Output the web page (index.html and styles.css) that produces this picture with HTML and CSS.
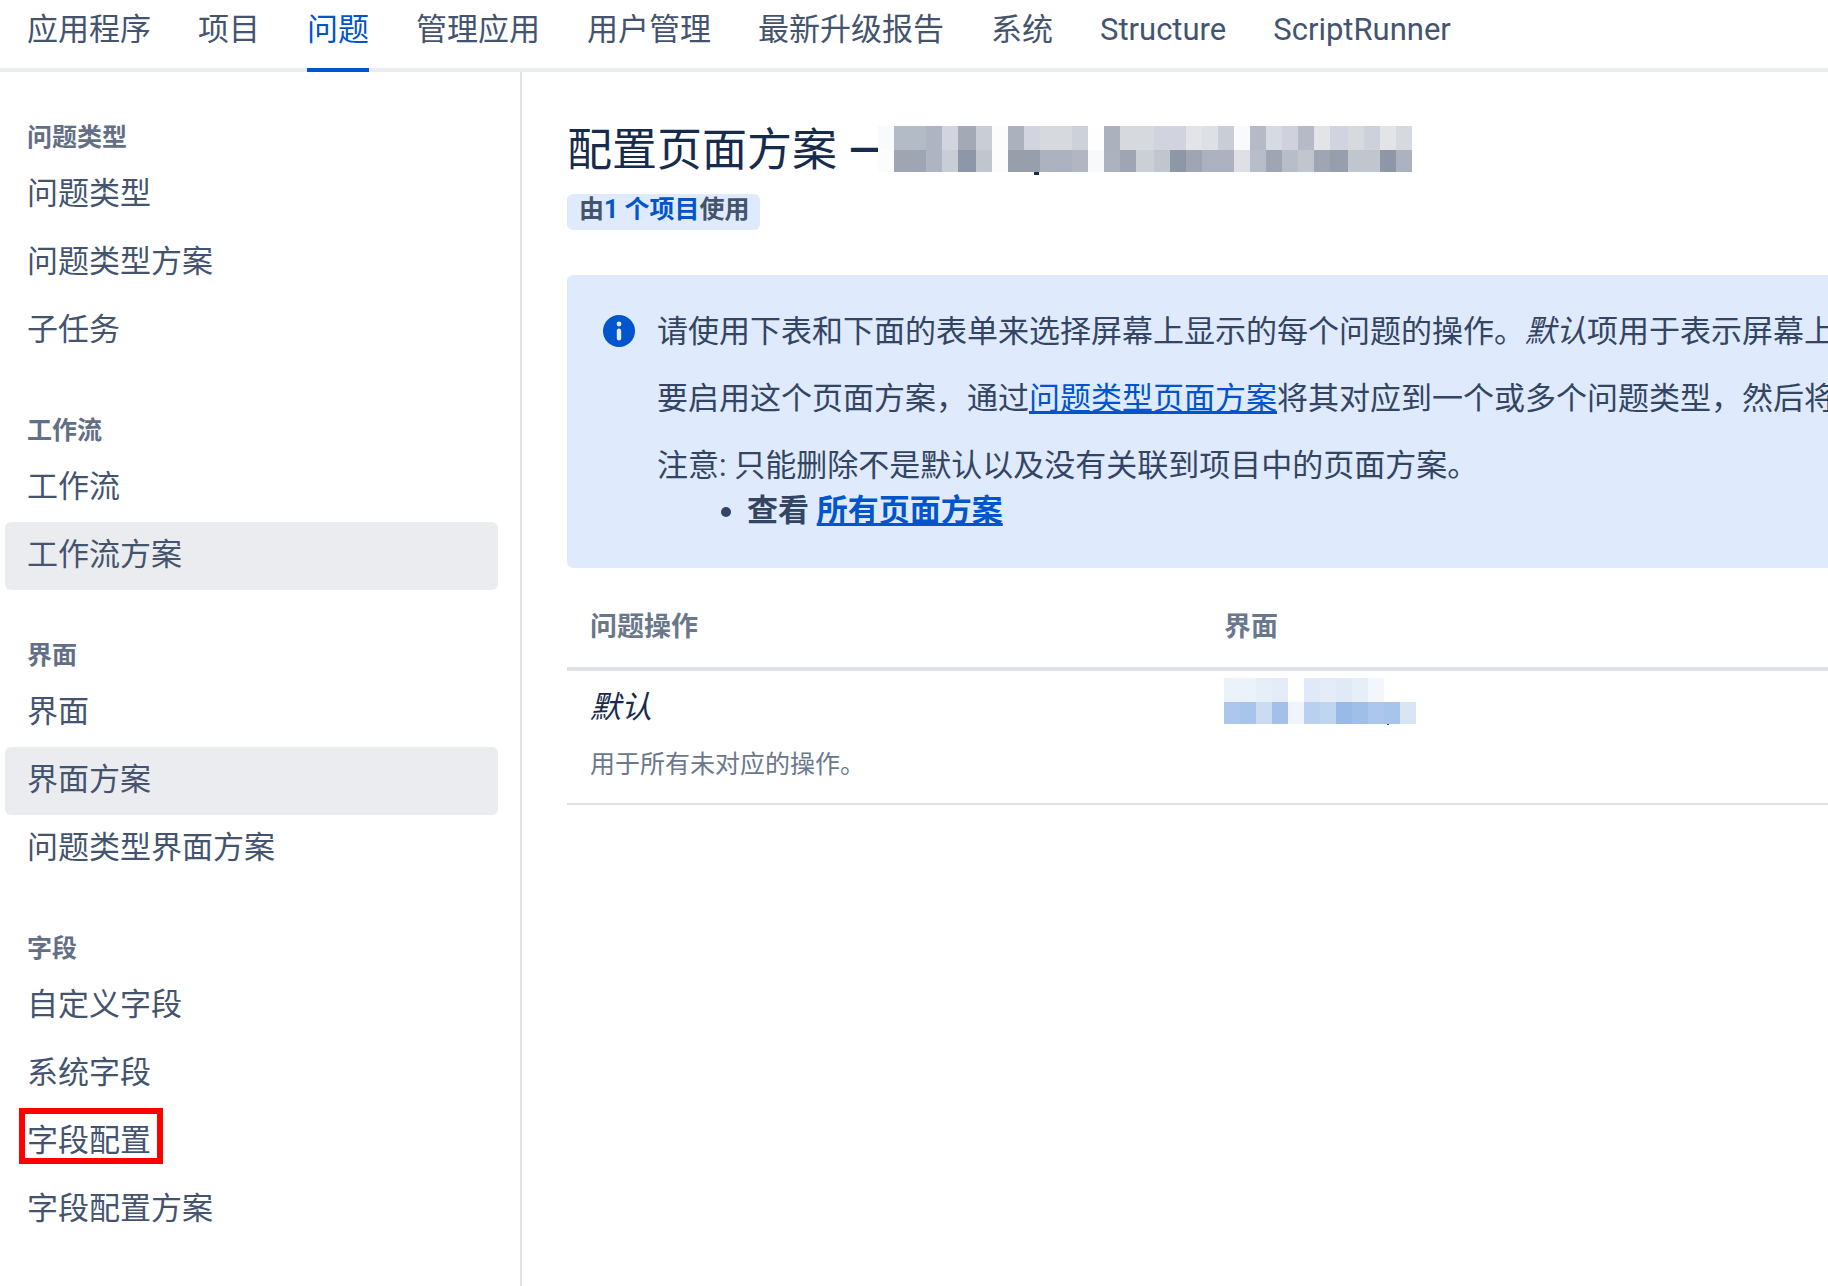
FILE: index.html
```html
<!DOCTYPE html>
<html lang="zh-CN">
<head>
<meta charset="utf-8">
<meta name="viewport" content="width=device-width, initial-scale=1">
<title>配置页面方案</title>
<link rel="stylesheet" href="styles.css">
</head>
<body>
<nav class="topnav" aria-label="管理">
  <a class="topnav-link" href="#">应用程序</a>
  <a class="topnav-link" href="#">项目</a>
  <a class="topnav-link is-active" href="#" aria-current="page">问题</a>
  <a class="topnav-link" href="#">管理应用</a>
  <a class="topnav-link" href="#">用户管理</a>
  <a class="topnav-link" href="#">最新升级报告</a>
  <a class="topnav-link" href="#">系统</a>
  <a class="topnav-link" href="#">Structure</a>
  <a class="topnav-link" href="#">ScriptRunner</a>
</nav>
<div class="page">
  <aside class="sidebar">
    <section class="group">
      <h2 class="group-title">问题类型</h2>
      <a class="item" href="#">问题类型</a>
      <a class="item" href="#">问题类型方案</a>
      <a class="item" href="#">子任务</a>
    </section>
    <section class="group">
      <h2 class="group-title">工作流</h2>
      <a class="item" href="#">工作流</a>
      <a class="item is-shaded" href="#">工作流方案</a>
    </section>
    <section class="group">
      <h2 class="group-title">界面</h2>
      <a class="item" href="#">界面</a>
      <a class="item is-shaded" href="#">界面方案</a>
      <a class="item" href="#">问题类型界面方案</a>
    </section>
    <section class="group">
      <h2 class="group-title">字段</h2>
      <a class="item" href="#">自定义字段</a>
      <a class="item" href="#">系统字段</a>
      <a class="item is-marked" href="#">字段配置</a>
      <a class="item" href="#">字段配置方案</a>
    </section>
  </aside>
  <main class="content">
    <h1 class="title">
      <span>配置页面方案 <span class="dash">—</span></span>
      <svg class="title-mask" width="534" height="49" viewBox="0 0 534 49" shape-rendering="crispEdges" aria-hidden="true">
        <path fill="#f8fafc" d="M0 0h16v24H0zM356 0h16v24h-16z"/>
        <path fill="#fcfcfc" d="M114 0h16v46h-16zM0 24h16v22H0z"/>
        <path fill="#b3bbc6" d="M16 0h32v24H16z"/>
        <path fill="#aeb4c1" d="M48 0h16v46H48z"/>
        <path fill="#d2d5df" d="M64 0h16v24H64zM146 0h16v24h-16z"/>
        <path fill="#a4a9b6" d="M80 0h18v24H80z"/>
        <path fill="#c9cdd6" d="M98 0h16v24H98zM64 24h16v22H64z"/>
        <path fill="#abb2be" d="M130 0h16v24h-16zM226 0h16v24h-16z"/>
        <path fill="#d6d9dd" d="M162 0h32v24h-32zM242 0h34v24h-34zM470 0h16v24h-16zM518 0h16v24h-16z"/>
        <path fill="#cdd1d9" d="M194 0h16v24h-16zM486 0h16v24h-16z"/>
        <path fill="#d1d4de" d="M276 0h32v24h-32zM452 0h18v24h-18z"/>
        <path fill="#e2e4e8" d="M308 0h16v24h-16zM436 0h16v24h-16zM502 0h16v24h-16z"/>
        <path fill="#dde1e5" d="M324 0h16v24h-16z"/>
        <path fill="#c9cdd5" d="M340 0h16v24h-16z"/>
        <path fill="#b6bac6" d="M372 0h16v24h-16zM420 0h16v24h-16z"/>
        <path fill="#d6dae3" d="M388 0h16v24h-16z"/>
        <path fill="#cfd2dc" d="M404 0h16v24h-16z"/>
        <path fill="#9fa5b3" d="M16 24h32v22H16zM242 24h16v22h-16zM308 24h16v22h-16zM388 24h16v22h-16zM436 24h16v22h-16z"/>
        <path fill="#8e97a8" d="M80 24h18v22H80zM292 24h16v22h-16zM502 24h16v22h-16z"/>
        <path fill="#c0c5ce" d="M98 24h16v22H98zM276 24h16v22h-16zM420 24h16v22h-16zM470 24h32v22h-32z"/>
        <path fill="#979eac" d="M130 24h32v22h-32zM452 24h18v22h-18z"/>
        <path fill="#acb2bf" d="M162 24h32v22h-32zM226 24h16v22h-16zM324 24h32v22h-32zM518 24h16v22h-16z"/>
        <path fill="#b1b6c2" d="M194 24h16v22h-16z"/>
        <path fill="#fefefe" d="M210 0h16v24h-16z"/>
        <path fill="#f8f9fb" d="M210 24h16v22h-16z"/>
        <path fill="#cbd0d7" d="M258 24h18v22h-18z"/>
        <path fill="#dfe0e6" d="M356 24h16v22h-16z"/>
        <path fill="#b7bec9" d="M372 24h16v22h-16zM404 24h16v22h-16z"/>
        <path fill="#172b4d" d="M156 46h5v3h-5z"/>
      </svg>
    </h1>
    <div class="badge">由<a href="#">1 个项目</a>使用</div>
    <section class="info">
      <svg class="info-icon" width="32" height="32" viewBox="0 0 32 32" aria-hidden="true">
        <circle cx="16" cy="16" r="16" fill="#0055cc"/>
        <circle cx="16" cy="9" r="2.4" fill="#dfeafc"/>
        <rect x="13.8" y="13.4" width="4.4" height="12" rx="2.2" fill="#dfeafc"/>
      </svg>
      <div class="info-body">
        <p>请使用下表和下面的表单来选择屏幕上显示的每个问题的操作。<em>默认</em>项用于表示屏幕上</p>
        <p>要启用这个页面方案，通过<a href="#">问题类型页面方案</a>将其对应到一个或多个问题类型，然后将</p>
        <p>注意: 只能删除不是默认以及没有关联到项目中的页面方案。</p>
        <ul>
          <li><strong>查看 <a href="#">所有页面方案</a></strong></li>
        </ul>
      </div>
    </section>
    <table class="grid">
      <thead>
        <tr><th class="col-action" scope="col">问题操作</th><th scope="col">界面</th></tr>
      </thead>
      <tbody>
        <tr>
          <td><em class="action">默认</em><div class="hint">用于所有未对应的操作。</div></td>
          <td class="cell-mask">
            <svg width="192" height="48" viewBox="0 0 192 48" shape-rendering="crispEdges" aria-hidden="true">
              <path fill="#ebf2fa" d="M0 0h32v24H0z"/>
              <path fill="#e6eff8" d="M32 0h16v24H32zM128 0h16v24h-16z"/>
              <path fill="#e5ecf8" d="M48 0h16v24H48zM96 0h16v24H96z"/>
              <path fill="#e0e9f8" d="M80 0h16v24H80z"/>
              <path fill="#dfeaf6" d="M112 0h16v24h-16z"/>
              <path fill="#f3f7fc" d="M144 0h16v24h-16z"/>
              <path fill="#adc7ec" d="M0 24h16v22H0zM144 24h16v22h-16z"/>
              <path fill="#a7c5eb" d="M16 24h16v22H16zM160 24h16v22h-16z"/>
              <path fill="#cbdbf2" d="M32 24h16v22H32z"/>
              <path fill="#a4c0e9" d="M48 24h16v22H48z"/>
              <path fill="#f0f4fc" d="M64 24h16v22H64z"/>
              <path fill="#b9d0ef" d="M80 24h16v22H80z"/>
              <path fill="#bfd5f0" d="M96 24h16v22H96z"/>
              <path fill="#98bae7" d="M112 24h16v22h-16z"/>
              <path fill="#9fbfe8" d="M128 24h16v22h-16z"/>
              <path fill="#d8e5f5" d="M176 24h16v22h-16z"/>
              <path fill="#0055cc" d="M163 46h2v1h-2z"/>
            </svg>
          </td>
        </tr>
      </tbody>
    </table>
  </main>
</div>
</body>
</html>
```
FILE: styles.css
```css
*,
*::after {
  box-sizing: border-box;
}

body {
  margin: 0;
  min-height: 100vh;
  display: flex;
  flex-direction: column;
  overflow-x: hidden;
  background: #fff;
  color: #172b4d;
  font-family: Roboto, "Noto Sans CJK SC", sans-serif;
  font-size: 31px;
  line-height: 45px;
}

a {
  color: #0055cc;
}

.topnav {
  display: flex;
  gap: 47px;
  height: 72px;
  padding: 0 27px;
  border-bottom: 4px solid #ebecf0;
  white-space: nowrap;
}

.topnav-link {
  height: 72px;
  padding-top: 7px;
  color: #44546f;
  text-decoration: none;
}

.topnav-link.is-active {
  color: #0055cc;
  border-bottom: 4px solid #0055cc;
}

.page {
  flex: 1;
  display: flex;
}

.sidebar {
  flex: 0 0 522px;
  padding: 0 22px 45px 5px;
  border-right: 2px solid #dfe1e6;
}

.group {
  padding-top: 45px;
}

.group-title {
  margin: 0;
  padding: 0 22px 2px;
  color: #626f86;
  font-size: 25px;
  font-weight: 700;
  line-height: 42px;
}

.item {
  display: block;
  position: relative;
  padding: 10px 22px 13px;
  border-radius: 6px;
  color: #44546f;
  text-decoration: none;
}

.item.is-shaded {
  background: #ebecf0;
}

/* Red frame that calls out one entry */
.item.is-marked::after {
  content: "";
  position: absolute;
  top: 0;
  left: 14px;
  width: 144px;
  height: 56px;
  border: 6px solid #f00;
}

.content {
  flex: 1;
  min-width: 0;
  overflow: hidden;
  padding: 45px 0 45px 45px;
}

.title {
  display: flex;
  align-items: flex-start;
  margin: 0;
  font-size: 45px;
  font-weight: 400;
  line-height: 67px;
  white-space: nowrap;
}

.dash {
  font-weight: 500;
}

/* The mask covers the end of the dash */
.title-mask {
  flex: none;
  margin: 9px 0 0 -5px;
}

.badge {
  width: fit-content;
  height: 36px;
  margin-top: 10px;
  padding: 0 10px 0 12px;
  border-radius: 6px;
  background: #dfeafc;
  color: #44546f;
  font-size: 25px;
  font-weight: 700;
  line-height: 31px;
}

.badge a {
  text-decoration: none;
}

.info {
  display: flex;
  gap: 22px;
  margin-top: 45px;
  padding: 34px 0 35px 36px;
  border-radius: 6px 0 0 6px;
  background: #dfeafc;
  color: #344563;
  white-space: nowrap;
}

.info-icon {
  flex: none;
  margin-top: 6px;
}

.info p {
  margin: 0 0 22px;
}

.info p:last-of-type {
  margin-bottom: 0;
}

.info ul {
  margin: 0;
  padding-left: 90px;
}

.grid {
  width: 100%;
  margin-top: 22px;
  border-collapse: collapse;
  table-layout: fixed;
  text-align: left;
}

.grid th {
  padding: 19px 23px 22px;
  border-bottom: 4px solid #dfe1e6;
  color: #6b778c;
  font-size: 27px;
  font-weight: 700;
  line-height: 36px;
}

.grid .col-action {
  width: 634px;
}

.grid td {
  padding: 14px 23px 20px;
  border-bottom: 2px solid #dfe1e6;
  vertical-align: top;
}

.grid .cell-mask {
  padding-top: 7px;
}

.cell-mask svg {
  display: block;
}

.action {
  display: block;
}

.hint {
  margin-top: 17px;
  color: #6b778c;
  font-size: 25px;
  line-height: 36px;
}
```
